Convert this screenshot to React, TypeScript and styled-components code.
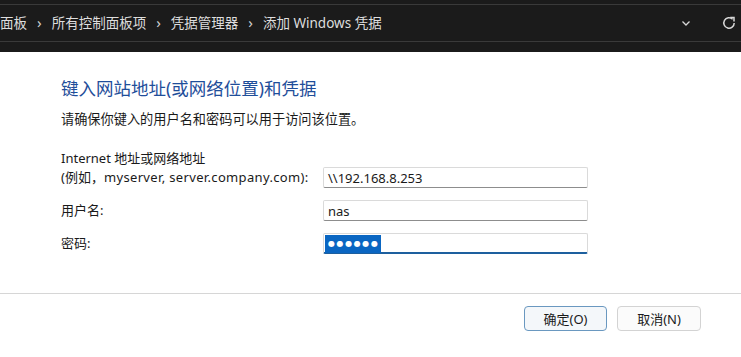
import React from 'react';
import styled, { createGlobalStyle } from 'styled-components';

const GlobalStyle = createGlobalStyle`
  html, body {
    margin: 0;
    padding: 0;
    background: #ffffff;
  }
  body {
    font-family: "Noto Sans", "Noto Sans CJK SC", sans-serif;
    color: #1a1a1a;
  }
`;

const Page = styled.div`
  width: 741px;
  height: 357px;
  overflow: hidden;
  display: flex;
  flex-direction: column;
  background: #ffffff;
`;

const AddressBar = styled.div`
  height: 52px;
  box-sizing: border-box;
  background: #1b1b1b;
  padding: 4px 0 10px;
`;

const AddressInner = styled.div`
  height: 38px;
  box-sizing: border-box;
  border-top: 1px solid #3a3a3a;
  border-bottom: 1px solid #3a3a3a;
  display: flex;
  align-items: center;
  padding-right: 4px;
`;

const Crumbs = styled.div`
  flex: 1;
  display: flex;
  align-items: center;
  gap: 9px;
  margin-top: -2px;
  font-family: "Noto Sans", "Noto Sans CJK SC", sans-serif;
  font-size: 13.5px;
  color: #dedede;
  white-space: nowrap;
`;

const Sep = styled.span`
  color: #cfcfcf;
  font-size: 15px;
  padding: 0 1px;
`;

const BarIcon = styled.div<{ $ml: number }>`
  margin-left: ${(p) => p.$ml}px;
  display: flex;
  align-items: center;
  color: #d8d8d8;
`;

const Content = styled.div`
  flex: 1;
  padding: 25px 0 0 61px;
`;

const Heading = styled.div`
  font-family: "Noto Sans", "Noto Sans CJK SC", sans-serif;
  font-size: 17.5px;
  line-height: 22px;
  color: #1f4e9a;
`;

const Intro = styled.div`
  margin-top: 11px;
  font-size: 13.2px;
  line-height: 18px;
  color: #1a1a1a;
`;

const Form = styled.div`
  margin-top: 21px;
  display: grid;
  grid-template-columns: 262px 265px;
  row-gap: 12px;
  align-items: end;
`;

const Label = styled.div`
  font-size: 13px;
  line-height: 19px;
  color: #1a1a1a;
  padding-bottom: 1px;
  white-space: nowrap;
`;

const Latin = styled.span`
  letter-spacing: 0.35px;
`;

const Field = styled.div<{ $focused?: boolean }>`
  height: 21px;
  box-sizing: border-box;
  border: 1px solid #dadada;
  border-bottom: ${(p) => (p.$focused ? '2px solid #1d5f9e' : '1px solid #8d8d8d')};
  border-radius: 2px;
  background: #ffffff;
  display: flex;
  align-items: center;
  padding: 0 0 0 4px;
  font-size: 13px;
  color: #1a1a1a;
`;

const Selected = styled.span`
  margin-left: -3px;
  height: 18px;
  margin-top: 1px;
  display: flex;
  align-items: center;
  padding: 0 2px 0 3px;
  background: #0a66c2;
  color: #ffffff;
  font-family: "DejaVu Sans", sans-serif;
  font-size: 8px;
  letter-spacing: 1.6px;
`;

const Footer = styled.div`
  height: 64px;
  box-sizing: border-box;
  border-top: 1px solid #d6d6d6;
  display: flex;
  justify-content: flex-end;
  align-items: flex-start;
  gap: 10px;
  padding: 12px 40px 0 0;
`;

const Button = styled.div<{ $primary?: boolean }>`
  height: 25px;
  box-sizing: border-box;
  width: ${(p) => (p.$primary ? 83 : 84)}px;
  border: 1px solid ${(p) => (p.$primary ? '#6a98c0' : '#d3d3d3')};
  border-radius: 4px;
  background: ${(p) => (p.$primary ? '#f4f7fa' : '#fbfbfb')};
  display: flex;
  align-items: center;
  justify-content: center;
  font-size: 13px;
  color: #1a1a1a;
`;

const crumbs = ['面板', '所有控制面板项', '凭据管理器', '添加 Windows 凭据'];

export default function App() {
  return (
    <Page>
      <GlobalStyle />
      <AddressBar>
        <AddressInner>
          <Crumbs>
            {crumbs.map((c, i) => (
              <React.Fragment key={c}>
                {i > 0 && <Sep>›</Sep>}
                <span>{c}</span>
              </React.Fragment>
            ))}
          </Crumbs>
          <BarIcon $ml={0}>
            <svg width="10" height="8" viewBox="0 0 10 8">
              <path d="M1.5 2.5 L5 6 L8.5 2.5" fill="none" stroke="currentColor" strokeWidth="1.3" />
            </svg>
          </BarIcon>
          <BarIcon $ml={30}>
            <svg width="16" height="16" viewBox="0 0 16 16">
              <path
                d="M13.2 8 A5.2 5.2 0 1 1 11.6 4.2"
                fill="none"
                stroke="currentColor"
                strokeWidth="1.5"
              />
              <path d="M9.2 2.6 L13 2.6 L13 6.4" fill="none" stroke="currentColor" strokeWidth="1.5" />
            </svg>
          </BarIcon>
        </AddressInner>
      </AddressBar>

      <Content>
        <Heading>键入网站地址(或网络位置)和凭据</Heading>
        <Intro>请确保你键入的用户名和密码可以用于访问该位置。</Intro>
        <Form>
          <Label>
            Internet 地址或网络地址
            <br />
            (例如，<Latin>myserver, server.company.com):</Latin>
          </Label>
          <Field>\\192.168.8.253</Field>
          <Label>用户名:</Label>
          <Field>nas</Field>
          <Label>密码:</Label>
          <Field $focused>
            <Selected>●●●●●●</Selected>
          </Field>
        </Form>
      </Content>

      <Footer>
        <Button $primary>确定(O)</Button>
        <Button>取消(N)</Button>
      </Footer>
    </Page>
  );
}
